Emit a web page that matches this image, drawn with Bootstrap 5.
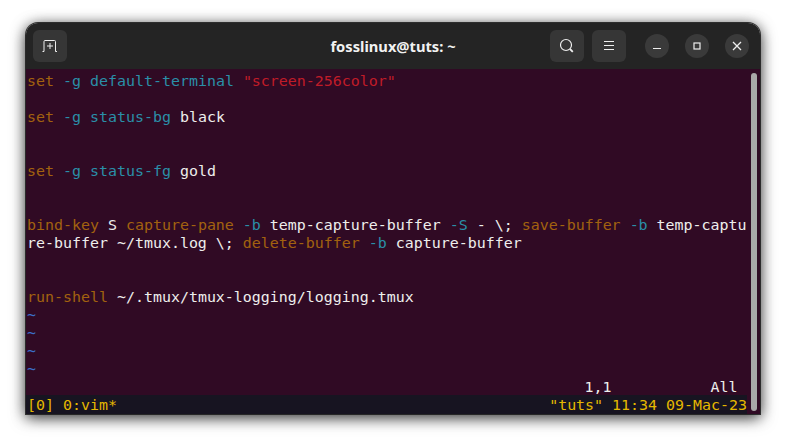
<!DOCTYPE html>
<html lang="en">
<head>
<meta charset="utf-8">
<title>fosslinux@tuts: ~</title>
<link href="https://cdn.jsdelivr.net/npm/bootstrap@5.3.0/dist/css/bootstrap.min.css" rel="stylesheet">
<style>
html,body{height:100%;margin:0;background:#fff;overflow:hidden}
.stage{padding:23px 26px 0 26px;height:443px}
.win{height:391px;border-radius:12px 12px 0 0;overflow:hidden;box-shadow:0 2px 14px rgba(0,0,0,.55),0 0 0 1px #3a3a3a}
.winwrap{border-radius:12px 12px 0 0;box-shadow:0 4px 16px rgba(0,0,0,.5)}
.tbar{height:46px;background:#242424;padding:7px 7px 0 7px;display:grid;grid-template-columns:1fr auto 1fr;align-items:start}
.tbtn{width:34px;height:32px;background:#363636;border-radius:6px;color:#eee}
.cbtn{width:24px;height:24px;background:#3a3a3a;border-radius:50%;margin-top:4px}
.ttl{font:700 14.7px/32px "Noto Sans","Open Sans",sans-serif;color:#f2f2f2}
.tright{gap:8px}
.cgroup{gap:16px;margin-left:11px;margin-right:4px}
.tbody{height:345px;background:#300a24;padding-top:2px}
.pane{width:720px;margin-left:1px;flex:none}
.ln{height:18px;padding-top:1px;font:14.95px/18px "DejaVu Sans Mono","Liberation Mono",monospace;color:#eeeeec;white-space:pre}
.o{color:#a2620f}.t{color:#2a8fa8}.r{color:#c01c28}.b{color:#3b6fc9}
.stat{background:#171421;color:#e5b800;height:19px;margin-left:-1px;padding-left:1px}
.sbar{width:6px;margin:2px 0 3px 4px;height:338px;background:#a9a7a8;border-radius:3px}
</style>
</head>
<body>
<div class="stage">
 <div class="winwrap">
 <div class="win d-flex flex-column">
  <div class="tbar">
   <div class="d-flex">
    <div class="tbtn d-flex align-items-center justify-content-center">
     <svg width="16" height="12" viewBox="0 0 16 12" fill="none" stroke="#eee" stroke-width="1"><path d="M.5 11.500h1.500V1.500q0-1 1-1h9.500q1 0 1 1v10h1.500M8 3v6M5 6h6"/></svg>
    </div>
   </div>
   <div class="ttl">fosslinux@tuts: ~</div>
   <div class="d-flex justify-content-end tright">
    <div class="tbtn d-flex align-items-center justify-content-center">
     <svg width="16" height="16" viewBox="0 0 16 16" fill="none" stroke="#eee" stroke-width="1.200"><circle cx="7" cy="7" r="5.500"/><path d="M11 11l2.800 2.800" stroke-width="1.800"/></svg>
    </div>
    <div class="tbtn d-flex align-items-center justify-content-center">
     <svg width="12" height="12" viewBox="0 0 12 12" fill="none" stroke="#eee" stroke-width="1"><path d="M1 1.500h10M1 5.500h10M1 9.500h10"/></svg>
    </div>
    <div class="d-flex cgroup">
     <div class="cbtn d-flex align-items-center justify-content-center">
      <svg width="10" height="10" viewBox="0 0 10 10" fill="none" stroke="#eee" stroke-width="1.200"><path d="M1 7.500h8"/></svg>
     </div>
     <div class="cbtn d-flex align-items-center justify-content-center">
      <svg width="10" height="10" viewBox="0 0 10 10" fill="none" stroke="#eee" stroke-width="1.200"><rect x="2" y="2" width="6" height="6"/></svg>
     </div>
     <div class="cbtn d-flex align-items-center justify-content-center">
      <svg width="10" height="10" viewBox="0 0 10 10" fill="none" stroke="#eee" stroke-width="1.300"><path d="M1 1l8 8M9 1l-8 8"/></svg>
     </div>
    </div>
   </div>
  </div>
  <div class="tbody d-flex">
   <div class="pane">
    <div class="ln"><span class="o">set</span> <span class="t">-g</span> <span class="t">default-terminal</span> <span class="r">"screen-256color"</span></div>
    <div class="ln"></div>
    <div class="ln"><span class="o">set</span> <span class="t">-g</span> <span class="t">status-bg</span> black</div>
    <div class="ln"></div>
    <div class="ln"></div>
    <div class="ln"><span class="o">set</span> <span class="t">-g</span> <span class="t">status-fg</span> gold</div>
    <div class="ln"></div>
    <div class="ln"></div>
    <div class="ln"><span class="o">bind-key</span> S <span class="o">capture-pane</span> <span class="t">-b</span> temp-capture-buffer <span class="t">-S</span> - \; <span class="o">save-buffer</span> <span class="t">-b</span> temp-captu</div>
    <div class="ln">re-buffer ~/tmux.log \; <span class="o">delete-buffer</span> <span class="t">-b</span> capture-buffer</div>
    <div class="ln"></div>
    <div class="ln"></div>
    <div class="ln"><span class="o">run-shell</span> ~/.tmux/tmux-logging/logging.tmux</div>
    <div class="ln b">~</div>
    <div class="ln b">~</div>
    <div class="ln b">~</div>
    <div class="ln b">~</div>
    <div class="ln">                                                              1,1           All</div>
    <div class="ln stat d-flex justify-content-between"><span>[0] 0:vim*</span><span>"tuts" 11:34 09-Mac-23</span></div>
   </div>
   <div class="sbar"></div>
  </div>
 </div>
 </div>
</div>
</body>
</html>
